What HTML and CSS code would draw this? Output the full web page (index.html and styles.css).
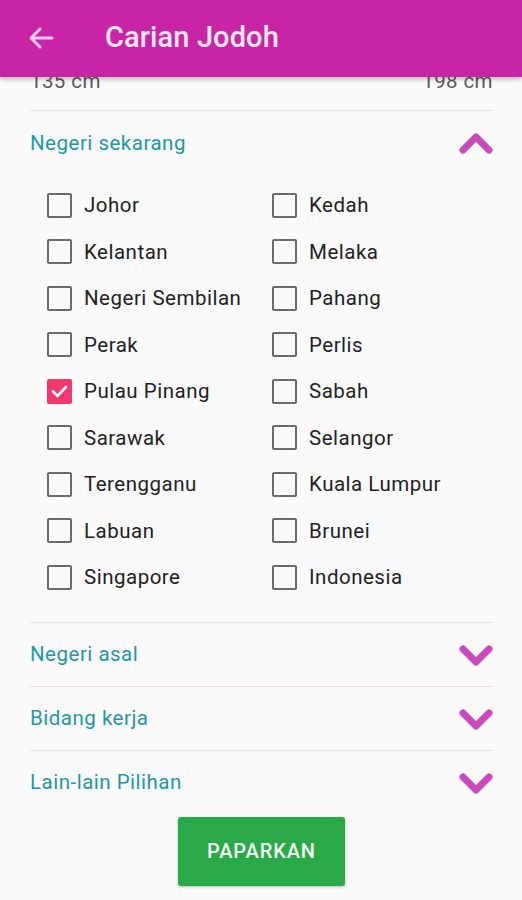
FILE: index.html
```html
<!DOCTYPE html>
<html>
<head>
<meta charset="utf-8">
<link rel="stylesheet" href="styles.css">
</head>
<body>
<header class="appbar">
  <svg class="back" width="26" height="24" viewBox="0 0 26 24"><path d="M24 12H3M12 3L3 12l9 9" fill="none" stroke="#f6c9ee" stroke-width="3" stroke-linecap="round" stroke-linejoin="round"/></svg>
  <h1 class="title">Carian Jodoh</h1>
</header>
<main class="content">
  <div class="range"><span>135 cm</span><span>198 cm</span></div>
  <section class="section">
    <div class="sec-head"><span class="sec-title">Negeri sekarang</span>
      <svg class="chev" width="34" height="21" viewBox="0 0 34 21"><polyline points="4,17 17,4 30,17" fill="none" stroke="#c94cbd" stroke-width="7" stroke-linecap="round" stroke-linejoin="round"/></svg>
    </div>
    <div class="grid">
      <label class="opt"><span class="box"></span>Johor</label>
      <label class="opt"><span class="box"></span>Kedah</label>
      <label class="opt"><span class="box"></span>Kelantan</label>
      <label class="opt"><span class="box"></span>Melaka</label>
      <label class="opt"><span class="box"></span>Negeri Sembilan</label>
      <label class="opt"><span class="box"></span>Pahang</label>
      <label class="opt"><span class="box"></span>Perak</label>
      <label class="opt"><span class="box"></span>Perlis</label>
      <label class="opt"><span class="box checked"><svg width="25" height="25" viewBox="0 0 25 25"><polyline points="6,12.5 10.5,17 19,8" fill="none" stroke="#fff" stroke-width="2.6" stroke-linecap="round" stroke-linejoin="round"/></svg></span>Pulau Pinang</label>
      <label class="opt"><span class="box"></span>Sabah</label>
      <label class="opt"><span class="box"></span>Sarawak</label>
      <label class="opt"><span class="box"></span>Selangor</label>
      <label class="opt"><span class="box"></span>Terengganu</label>
      <label class="opt"><span class="box"></span>Kuala Lumpur</label>
      <label class="opt"><span class="box"></span>Labuan</label>
      <label class="opt"><span class="box"></span>Brunei</label>
      <label class="opt"><span class="box"></span>Singapore</label>
      <label class="opt"><span class="box"></span>Indonesia</label>
    </div>
  </section>
  <section class="section">
    <div class="sec-head"><span class="sec-title">Negeri asal</span>
      <svg class="chev" width="34" height="21" viewBox="0 0 34 21"><polyline points="4,4 17,17 30,4" fill="none" stroke="#c94cbd" stroke-width="7" stroke-linecap="round" stroke-linejoin="round"/></svg>
    </div>
  </section>
  <section class="section pink">
    <div class="sec-head"><span class="sec-title">Bidang kerja</span>
      <svg class="chev" width="34" height="21" viewBox="0 0 34 21"><polyline points="4,4 17,17 30,4" fill="none" stroke="#c94cbd" stroke-width="7" stroke-linecap="round" stroke-linejoin="round"/></svg>
    </div>
  </section>
  <section class="section">
    <div class="sec-head"><span class="sec-title">Lain-lain Pilihan</span>
      <svg class="chev" width="34" height="21" viewBox="0 0 34 21"><polyline points="4,4 17,17 30,4" fill="none" stroke="#c94cbd" stroke-width="7" stroke-linecap="round" stroke-linejoin="round"/></svg>
    </div>
  </section>
  <div class="actions"><button class="btn">PAPARKAN</button></div>
</main>
</body>
</html>
```
FILE: styles.css
```css
html, body {
  margin: 0;
  padding: 0;
  background: #fafafa;
  font-family: Roboto, "Noto Sans", sans-serif;
  height: 900px;
  overflow: hidden;
}
.appbar {
  position: sticky;
  top: 0;
  z-index: 2;
  height: 77px;
  background: #c724a6;
  display: flex;
  align-items: center;
  box-shadow: 0 2px 5px rgba(0,0,0,0.28);
}
.back {
  margin-left: 28px;
  margin-top: -2px;
}
.title {
  margin: 0 0 0 51px;
  font-size: 29px;
  font-weight: 500;
  color: #fbe6f7;
  margin-top: -3px;
  letter-spacing: 0.1px;
}
.content {
  padding: 0 29px 0 30px;
}
.range {
  display: flex;
  justify-content: space-between;
  margin-top: -8px;
  line-height: 24px;
  font-size: 20.5px;
  letter-spacing: 0.4px;
  color: #5c5c5c;
  padding-bottom: 17px;
}
.section {
  border-top: 1px solid #e6e6e6;
}
.section.pink {
  border-top-color: #f6dce6;
}
.sec-head {
  height: 63px;
  display: flex;
  align-items: center;
  justify-content: space-between;
}
.sec-title {
  font-size: 20.5px;
  letter-spacing: 0.5px;
  color: #1e98a6;
}
.chev {
  margin-top: 2px;
}
.grid {
  display: grid;
  grid-template-columns: 225px 1fr;
  grid-auto-rows: 46.5px;
  padding: 8px 0 21px 17px;
}
.opt {
  display: flex;
  align-items: center;
  gap: 12px;
  font-size: 20.5px;
  letter-spacing: 0.5px;
  color: #222;
}
.box {
  box-sizing: border-box;
  width: 25px;
  height: 25px;
  border: 2.5px solid #6b6b6b;
  border-radius: 2px;
  flex: none;
  display: flex;
}
.box.checked {
  border: none;
  background: #f4376f;
}
.actions {
  display: flex;
  justify-content: center;
  padding-top: 3px;
}
.btn {
  width: 167px;
  height: 69px;
  border: none;
  border-radius: 3px;
  background: #29a948;
  color: #f4fff6;
  font-family: Roboto, sans-serif;
  font-size: 20px;
  font-weight: 500;
  letter-spacing: 0.9px;
  box-shadow: 0 1px 3px rgba(0,0,0,0.25);
}
```
